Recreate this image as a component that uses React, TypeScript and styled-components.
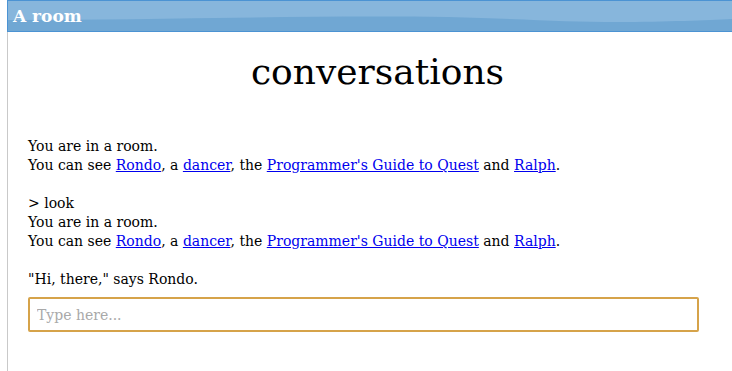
import React from 'react';
import styled, { createGlobalStyle } from 'styled-components';

const Global = createGlobalStyle`
  html, body {
    margin: 0;
    padding: 0;
    background: #fff;
    overflow: hidden;
  }
  body {
    font-family: 'DejaVu Serif', Georgia, serif;
    color: #000;
  }
`;

const Page = styled.div`
  margin-left: 7px;
  min-height: 371px;
  border-left: 1px solid #c9c9c9;
`;

const Header = styled.div`
  position: relative;
  height: 30px;
  margin-left: -1px;
  border: 1px solid #4b93d3;
  border-right: none;
  background: #87b6dc;
  overflow: hidden;
`;

const Wave = styled.svg`
  position: absolute;
  left: 0;
  top: 0;
  width: 100%;
  height: 100%;
`;

const HeaderTitle = styled.h1`
  position: relative;
  margin: 0;
  padding: 5px 0 0 5px;
  font-size: 17px;
  line-height: 20px;
  font-weight: bold;
  color: #fff;
`;

const Content = styled.div`
  padding: 0 33px 0 20px;
`;

const Title = styled.h2`
  margin: 15px 0 40px;
  padding-left: 28px;
  text-align: center;
  font-weight: normal;
  font-size: 36px;
  line-height: 50px;
`;

const Output = styled.div`
  font-size: 14px;
  line-height: 19px;
`;

const Para = styled.p<{ $last?: boolean }>`
  margin: 0 0 ${(p) => (p.$last ? '8px' : '19px')};
`;

const Link = styled.a`
  color: #0000ee;
  text-decoration: underline;
`;

const Input = styled.input`
  box-sizing: border-box;
  display: block;
  width: 100%;
  height: 35px;
  margin-top: 0;
  padding: 0 7px;
  border: 2px solid #d6a34a;
  border-radius: 2px;
  outline: none;
  font-family: 'DejaVu Serif', Georgia, serif;
  font-size: 14px;
  color: #000;
  &::placeholder {
    color: #a9a9a9;
  }
`;

const SeeLine = () => (
  <>
    You can see <Link href="#">Rondo</Link>, a <Link href="#">dancer</Link>, the{' '}
    <Link href="#">Programmer's Guide to Quest</Link> and <Link href="#">Ralph</Link>.
  </>
);

export default function App() {
  return (
    <>
      <Global />
      <Page>
        <Header>
          <Wave viewBox="0 0 725 30" preserveAspectRatio="none">
            <path
              d="M0 19 C 150 19, 300 14, 440 16 C 520 18, 560 21, 610 21 C 660 21, 700 19, 725 18 L 725 30 L 0 30 Z"
              fill="#70a7d3"
            />
          </Wave>
          <HeaderTitle>A room</HeaderTitle>
        </Header>
        <Content>
          <Title>conversations</Title>
          <Output>
            <Para>
              You are in a room.
              <br />
              <SeeLine />
            </Para>
            <Para>
              &gt; look
              <br />
              You are in a room.
              <br />
              <SeeLine />
            </Para>
            <Para $last>"Hi, there," says Rondo.</Para>
          </Output>
          <Input placeholder="Type here..." />
        </Content>
      </Page>
    </>
  );
}
